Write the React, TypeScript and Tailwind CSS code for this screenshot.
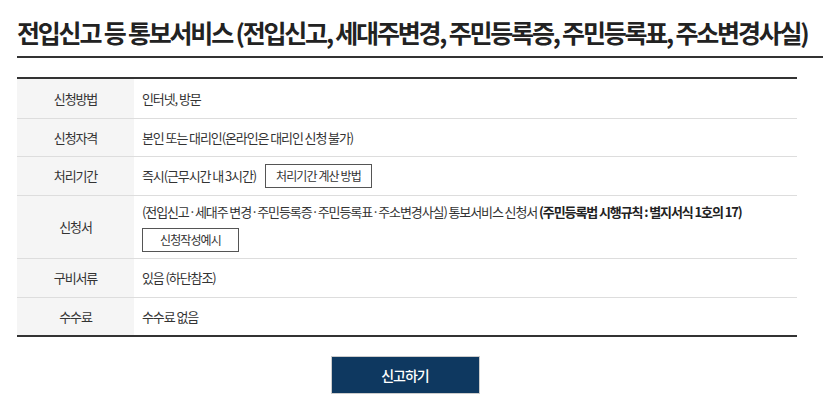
import React from "react";

type Row = {
  label: string;
  height: string;
  content: React.ReactNode;
};

function SmallButton({ children }: { children: React.ReactNode }) {
  return (
    <button className="h-[24px] border border-[#555] bg-white px-[10px] text-[12px] leading-[22px] tracking-[-0.9px] text-[#333]">
      {children}
    </button>
  );
}

const rows: Row[] = [
  { label: "신청방법", height: "h-[39px]", content: <span>인터넷, 방문</span> },
  {
    label: "신청자격",
    height: "h-[38px]",
    content: <span>본인 또는 대리인(온라인은 대리인 신청 불가)</span>,
  },
  {
    label: "처리기간",
    height: "h-[39px]",
    content: (
      <div className="flex items-center gap-[9px]">
        <span>즉시(근무시간 내 3시간)</span>
        <SmallButton>처리기간 계산 방법</SmallButton>
      </div>
    ),
  },
  {
    label: "신청서",
    height: "h-[63px]",
    content: (
      <div className="flex flex-col items-start gap-[6px]">
        <span>
          (전입신고·세대주 변경·주민등록증·주민등록표·주소변경사실) 통보서비스 신청서{" "}
          <b className="font-bold text-[#222]">(주민등록법 시행규칙 : 별지서식 1호의 17)</b>
        </span>
        <SmallButton>
          <span className="px-[7px]">신청작성예시</span>
        </SmallButton>
      </div>
    ),
  },
  { label: "구비서류", height: "h-[39px]", content: <span>있음 (하단참조)</span> },
  { label: "수수료", height: "h-[38px]", content: <span>수수료 없음</span> },
];

export default function App() {
  return (
    <div
      className="w-[823px] h-[409px] bg-white text-[#333]"
      style={{ fontFamily: '"Noto Sans CJK KR", "Noto Sans", sans-serif' }}
    >
      <div className="pl-[17px] pt-[12px]">
        <h2 className="h-[46px] text-[25px] font-bold leading-[40px] tracking-[-2.2px] text-[#222] border-b-2 border-[#333] whitespace-nowrap">
          전입신고 등 통보서비스 (전입신고, 세대주변경, 주민등록증, 주민등록표, 주소변경사실)
        </h2>
        <div className="mt-[19px] w-[780px] border-t-2 border-[#333] border-b-2">
          {rows.map((row, i) => (
            <div
              key={row.label}
              className={`flex ${row.height} ${i > 0 ? "border-t border-[#ddd]" : ""}`}
            >
              <div className="w-[117px] flex-shrink-0 flex items-center justify-center bg-[#f5f5f5] text-[13px] tracking-[-1.1px] text-[#333]">
                {row.label}
              </div>
              <div className="flex-1 flex items-center pl-[8px] text-[13px] tracking-[-1.1px] text-[#333]">
                {row.content}
              </div>
            </div>
          ))}
        </div>
        <div className="flex w-[776px] justify-center pt-[19px]">
          <button className="w-[149px] h-[38px] bg-[#0e3860] border border-[#ccc] text-white text-[14px] font-medium tracking-[-1px]">
            신고하기
          </button>
        </div>
      </div>
    </div>
  );
}
